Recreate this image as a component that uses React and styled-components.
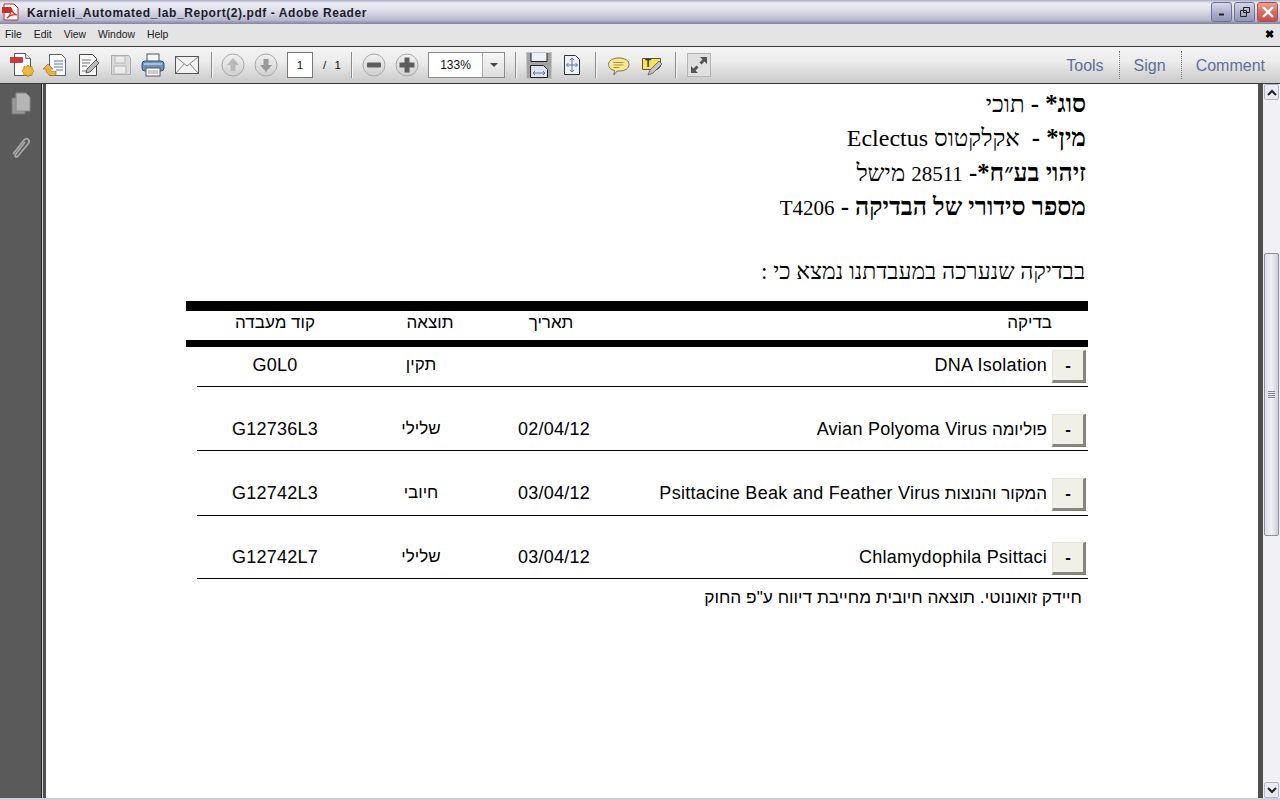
import React from 'react';
import styled, { createGlobalStyle } from 'styled-components';

const Global = createGlobalStyle`
  html, body { margin: 0; padding: 0; height: 100%; overflow: hidden; background: #fff; }
  #root { height: 100%; }
`;

const Shell = styled.div`
  width: 1280px;
  height: 800px;
  display: flex;
  flex-direction: column;
  overflow: hidden;
  font-family: "Liberation Sans", Arial, sans-serif;
`;

const TitleBar = styled.div`
  height: 24px;
  box-sizing: border-box;
  display: flex;
  align-items: center;
  padding: 0 2px 0 2px;
  background: linear-gradient(#a9aac2 0, #ebebf3 3px, #e2e2ec 9px, #b9b9cf 20px, #8d8da8 23px, #85859c 24px);
`;

const TitleIcon = styled.svg`
  width: 18px;
  height: 18px;
  margin-right: 7px;
`;

const TitleText = styled.div`
  flex: 1;
  font-size: 12px;
  font-weight: 700;
  letter-spacing: 0.57px;
  color: #1c1c2a;
  padding-top: 2px;
`;

const WinButton = styled.div`
  width: 21px;
  height: 20px;
  margin-left: 2px;
  box-sizing: border-box;
  border-radius: 3px;
  border: 1px solid ${p => (p.$close ? '#8c5a60' : '#6f7290')};
  background: ${p => (p.$close
    ? 'linear-gradient(#ee9f8c, #e0665a 55%, #cf4a45)'
    : 'linear-gradient(#d6d8ea, #adb0cc 55%, #9295b6)')};
  display: flex;
  align-items: center;
  justify-content: center;
`;

const MenuBar = styled.div`
  height: 22px;
  box-sizing: border-box;
  background: #e4e4e4;
  display: flex;
  align-items: center;
  padding: 0 5px 1px;
  gap: 12px;
  font-size: 10.4px;
  color: #1a1a1a;
`;

const MenuSpacer = styled.div`
  flex: 1;
`;

const MenuClose = styled.span`
  font-size: 11px;
  font-weight: 700;
  color: #000;
  margin-right: 1px;
`;

const Toolbar = styled.div`
  height: 38px;
  box-sizing: border-box;
  border-top: 1px solid #3a3a3a;
  border-bottom: 1px solid #3a3a3a;
  background: linear-gradient(#f4f4f4, #ececec 40%, #c9c9c9);
  display: flex;
  align-items: center;
  padding-left: 10px;
`;

const ToolIcon = styled.svg`
  width: 24px;
  height: 24px;
  margin-right: ${p => p.$gap ?? 9}px;
  flex: none;
`;

const Divider = styled.div`
  width: 1px;
  height: 26px;
  background: #8c8c8c;
  box-shadow: 1px 0 0 #f6f6f6;
  margin-right: ${p => p.$right ?? 10}px;
  flex: none;
`;

const PageBox = styled.div`
  width: 26px;
  height: 26px;
  box-sizing: border-box;
  background: #fff;
  border: 1px solid #777;
  font-size: 11.5px;
  color: #111;
  display: flex;
  align-items: center;
  justify-content: center;
  flex: none;
`;

const PageOf = styled.div`
  width: 38px;
  padding-left: 10px;
  box-sizing: border-box;
  font-size: 11.5px;
  color: #111;
  word-spacing: 5px;
  flex: none;
`;

const ZoomBox = styled.div`
  width: 77px;
  height: 26px;
  box-sizing: border-box;
  background: #fff;
  border: 1px solid #8c8c8c;
  display: flex;
  font-size: 12px;
  color: #111;
  flex: none;
  margin-right: 10px;
`;

const ZoomValue = styled.div`
  flex: 1;
  display: flex;
  align-items: center;
  justify-content: center;
`;

const ZoomCaret = styled.div`
  width: 21px;
  border-left: 1px solid #aaa;
  background: linear-gradient(#f6f6f6, #dedede);
  display: flex;
  align-items: center;
  justify-content: center;
  &::after {
    content: '';
    border-left: 4px solid transparent;
    border-right: 4px solid transparent;
    border-top: 4px solid #444;
  }
`;

const ActiveTool = styled.div`
  width: 26px;
  height: 27px;
  box-sizing: border-box;
  background: #a3a3a3;
  border: 1px solid #c4c4c4;
  display: flex;
  align-items: center;
  justify-content: center;
  margin-right: 8px;
  flex: none;
`;

const TaskLinks = styled.div`
  margin-left: auto;
  display: flex;
  align-items: stretch;
  height: 28px;
`;

const TaskLink = styled.div`
  display: flex;
  align-items: center;
  padding: 2px 15px 0 14px;
  font-size: 16px;
  color: #5d7293;
  border-right: ${p => (p.$last ? 'none' : '1px dotted #777')};
`;

const Body = styled.div`
  flex: 1;
  display: flex;
  min-height: 0;
`;

const BottomEdge = styled.div`
  height: 2px;
  flex: none;
  background: #cdcddb;
`;

const NavPane = styled.div`
  width: 41px;
  background: #5a5a5a;
  display: flex;
  flex-direction: column;
  align-items: center;
  padding: 8px 0 0 0;
  gap: 19px;
  box-sizing: border-box;
  flex: none;
`;

const NavEdge = styled.div`
  width: 5px;
  flex: none;
  background: linear-gradient(90deg, #242424 0 1px, #cfcfcf 1px 2px, #505050 2px);
`;

const Viewer = styled.div`
  flex: 1;
  background: #fff;
  min-width: 0;
  padding: 0 170px 0 140px;
  box-sizing: border-box;
  direction: rtl;
  overflow: hidden;
`;

const PageGutter = styled.div`
  width: 5px;
  background: #4f4f4f;
  flex: none;
`;

const Scrollbar = styled.div`
  width: 17px;
  flex: none;
  background: #f0f0f6;
  display: flex;
  flex-direction: column;
  align-items: center;
`;

const ScrollArrow = styled.div`
  width: 15px;
  height: 16px;
  box-sizing: border-box;
  border: 1px solid #b5b5c5;
  border-radius: 2px;
  background: #e9e9f1;
  display: flex;
  align-items: center;
  justify-content: center;
  flex: none;
`;

const ScrollTrack = styled.div`
  flex: 1;
  width: 100%;
  padding: 153px 1px 0;
  box-sizing: border-box;
`;

const ScrollThumb = styled.div`
  height: 283px;
  box-sizing: border-box;
  border: 1px solid #8f8f9a;
  border-radius: 2px;
  background: linear-gradient(90deg, #dedee8, #f0f0f6 50%, #cfcfdc);
  display: flex;
  align-items: center;
  justify-content: center;
  &::after {
    content: '';
    width: 7px;
    height: 7px;
    background: repeating-linear-gradient(#85858f 0 1px, transparent 1px 2px);
  }
`;

const InfoLines = styled.div`
  display: flex;
  flex-direction: column;
  padding: 3px 2px 0 0;
  margin-bottom: 32px;
  font-family: "Liberation Serif", "Times New Roman", serif;
  font-size: 24px;
  color: #000;
`;

const InfoLine = styled.div`
  height: 34.3px;
  line-height: 34px;
  white-space: pre;
  b { font-weight: 700; font-size: 24.7px; }
`;

const Digits = styled.span`
  font-size: 21px;
`;

const Lead = styled.div`
  font-family: "Liberation Serif", "Times New Roman", serif;
  font-size: 23px;
  height: 36px;
  line-height: 32px;
  padding-right: 3px;
  color: #000;
`;

const HeadRow = styled.div`
  margin-top: 9px;
  border-top: 10px solid #000;
  border-bottom: 7px solid #000;
  height: 46px;
  padding-bottom: 5px;
  box-sizing: border-box;
  display: grid;
  grid-template-columns: 36px 1fr 110px 132px 178px;
  align-items: center;
  font-size: 17px;
  color: #000;
`;

const HeadCell = styled.div`
  text-align: ${p => (p.$start ? 'right' : 'center')};
  grid-column: ${p => p.$col};
`;

const Row = styled.div`
  margin-left: 11px;
  height: ${p => p.$h}px;
  box-sizing: border-box;
  border-bottom: 1px solid #000;
  display: grid;
  grid-template-columns: 36px 1fr 130px 136px 156px;
  align-items: start;
  font-size: 17px;
  color: #000;
  margin-bottom: ${p => p.$gap ?? 0}px;
`;

const MinusButton = styled.div`
  width: 34px;
  height: 33px;
  margin: 3px 2px 0 0;
  box-sizing: border-box;
  border-top: 1px solid #e6e5da;
  border-left: 1px solid #e6e5da;
  border-right: 3px solid #85857c;
  border-bottom: 3px solid #85857c;
  background: #f1f0e6;
  font-size: 17px;
  font-weight: 700;
  display: flex;
  align-items: center;
  justify-content: center;
`;

const Cell = styled.div`
  padding-top: 8px;
  white-space: nowrap;
  text-align: ${p => (p.$start ? 'right' : 'center')};
  padding-right: ${p => (p.$start ? '5px' : 0)};
`;

const Latin = styled.span`
  font-size: 18px;
  letter-spacing: 0.27px;
`;

const Note = styled.div`
  font-size: 17.3px;
  padding: 8px 6px 0 0;
  color: #000;
  white-space: nowrap;
`;

function Pdf() {
  return (
    <TitleIcon viewBox="0 0 18 18">
      <path d="M2 1h10l4 4v12H2z" fill="#fff" stroke="#a33" />
      <rect x="0" y="4" width="9" height="6" fill="#c8302a" />
      <path d="M5 15c3-2 5-7 4-10 1 4 3 6 6 7-4-1-7 0-10 3z" fill="none" stroke="#d22" strokeWidth="1.2" />
    </TitleIcon>
  );
}

const CreateIcon = () => (
  <ToolIcon viewBox="0 0 24 24" $gap={9}>
    <path d="M4.500 0.500h11l5 5v17h-16z" fill="#fdfdfd" stroke="#555" />
    <path d="M15.500 0.500v5h5" fill="#ddd" stroke="#777" />
    <rect x="0.500" y="4.500" width="12" height="5" fill="#d6333a" stroke="#8c1c20" strokeWidth=".6" />
    <path d="M18 12l1.500 2 2.500-.5.300 2.500 1.700 2-1.700 2-.3 2.500-2.500-.5L18 24l-1.500-2-2.500.5-.3-2.500-1.700-2 1.700-2 .3-2.500 2.500.5z" fill="#f0b93a" stroke="#b57d18" strokeWidth=".7" />
  </ToolIcon>
);

const CombineIcon = () => (
  <ToolIcon viewBox="0 0 24 24" $gap={10}>
    <path d="M6.500 1.500h12l4 4v17h-16z" fill="#fdfdfd" stroke="#56617c" />
    <path d="M11 8h9M11 11h9M11 14h9M13 17h7" stroke="#4a7cc0" strokeWidth="1.200" />
    <path d="M13 22c-6 2-10-1-10-6l-3 0 5-5 5 5h-3c0 2 2 3 6 2z" fill="#f0b040" stroke="#a87418" strokeWidth=".7" />
  </ToolIcon>
);

const EditIcon = () => (
  <ToolIcon viewBox="0 0 24 24" $gap={8}>
    <path d="M2.500 1.500h13l4 4v17h-17z" fill="#f7f7f7" stroke="#444" />
    <path d="M5 7h9M5 10h8M5 13h5M5 18h5" stroke="#777" />
    <path d="M9 20l1-4 9-9 3 3-9 9z" fill="#bbb" stroke="#444" strokeWidth=".8" />
  </ToolIcon>
);

const SaveIcon = () => (
  <ToolIcon viewBox="0 0 24 24" $gap={8}>
    <path d="M2.500 2.500h17l2 2v17h-19z" fill="#dcdcdc" stroke="#aaa" />
    <rect x="6" y="3" width="10" height="7" fill="#ececec" stroke="#b4b4b4" />
    <rect x="5" y="13" width="12" height="8" fill="#ececec" stroke="#b4b4b4" />
  </ToolIcon>
);

const PrintIcon = () => (
  <ToolIcon viewBox="0 0 24 24" $gap={10}>
    <rect x="6" y="1" width="12" height="8" fill="#f5f5f5" stroke="#555" />
    <rect x="1" y="8" width="22" height="10" rx="3" fill="#6f93b8" stroke="#33506f" />
    <rect x="3" y="10" width="18" height="2" fill="#a8c2dc" />
    <rect x="5" y="15" width="14" height="8" fill="#fff" stroke="#555" />
    <path d="M7 18h10M7 20h10" stroke="#999" />
  </ToolIcon>
);

const MailIcon = () => (
  <ToolIcon viewBox="0 0 24 24" $gap={12}>
    <rect x="0.500" y="3.500" width="23" height="17" fill="#f2f2f2" stroke="#555" />
    <path d="M1 4l11 9 11-9M1 20l8-9M23 20l-8-9" fill="none" stroke="#888" />
  </ToolIcon>
);

const RoundIcon = ({ kind }) => (
  <ToolIcon viewBox="0 0 24 24" $gap={9}>
    <defs>
      <linearGradient id={`g-${kind}`} x1="0" y1="0" x2="0" y2="1">
        <stop offset="0" stopColor="#f2f2f2" />
        <stop offset="1" stopColor="#cfcfcf" />
      </linearGradient>
    </defs>
    <circle cx="12" cy="12" r="11" fill={`url(#g-${kind})`} stroke="#a8a8a8" />
    {kind === 'up' && <path d="M12 5l6 7h-3.500v6h-5v-6H6z" fill="#b9b9b9" />}
    {kind === 'down' && <path d="M12 19l6-7h-3.500V6h-5v6H6z" fill="#9a9a9a" />}
    {kind === 'minus' && <rect x="5" y="9.500" width="14" height="5" rx="1" fill="#5e5e5e" />}
    {kind === 'plus' && <path d="M9.500 4.500h5v5h5v5h-5v5h-5v-5h-5v-5h5z" fill="#5e5e5e" />}
  </ToolIcon>
);

const FitWidth = () => (
  <svg width="18" height="25" viewBox="0 0 18 25">
    <path d="M1 0v8.500h16V0" fill="#eef1f6" stroke="#222" />
    <path d="M0.500 24.500v-12h13l4 4v8z" fill="#dfe4ec" stroke="#222" />
    <path d="M3 20h12M3 20l2-2M3 20l2 2M15 20l-2-2M15 20l-2 2" stroke="#5577aa" fill="none" />
  </svg>
);

const FitPage = () => (
  <ToolIcon viewBox="0 0 24 24" $gap={11}>
    <path d="M4.500 2.500h11l4 4v15h-15z" fill="#eef0f7" stroke="#333" />
    <path d="M12 5v14M6.500 12h11M12 5l-2 2M12 5l2 2M12 19l-2-2M12 19l2-2M6.500 12l2-2M6.500 12l2 2M17.500 12l-2-2M17.500 12l-2 2" stroke="#5577aa" fill="none" />
  </ToolIcon>
);

const Bubble = () => (
  <ToolIcon viewBox="0 0 24 24" $gap={9}>
    <path d="M12 5c6 0 10 2.500 10 6.500S18 18 12 18l-2 0-3 4 .5-4.500C3.500 16.500 1.500 14 1.500 11.500 1.500 7.500 6 5 12 5z" fill="#f6ea8c" stroke="#77775a" />
    <path d="M6.500 9.500h10M6.500 12h10M6.500 14.500h6" stroke="#a39a3f" />
  </ToolIcon>
);

const Sticky = () => (
  <ToolIcon viewBox="0 0 24 24" $gap={11}>
    <path d="M2.500 5.500h18v8l-3 3h-15z" fill="#f9e44a" stroke="#555" />
    <text x="5" y="14" fontSize="10" fontWeight="700" fontFamily="Liberation Sans" fill="#333">T</text>
    <path d="M8 22l2-5 9-9 3 3-9 9z" fill="#c3c3c3" stroke="#555" strokeWidth=".8" />
  </ToolIcon>
);

const Expand = () => (
  <ToolIcon viewBox="0 0 24 24" $gap={0}>
    <rect x="0.500" y="0.500" width="23" height="23" fill="#e0e0e0" stroke="#b4b4b4" />
    <path d="M13 4h7v7l-2.500-2.500-3 3-2-2 3-3z" fill="#555" />
    <path d="M11 20H4v-7l2.500 2.500 3-3 2 2-3 3z" fill="#555" />
  </ToolIcon>
);

const Chevron = ({ up }) => (
  <svg width="10" height="7" viewBox="0 0 10 7">
    <path d={up ? 'M1 6l4-4 4 4' : 'M1 1l4 4 4-4'} fill="none" stroke="#222" strokeWidth="2" />
  </svg>
);

const rows = [
  { test: <Latin>DNA Isolation</Latin>, date: '', result: 'תקין', code: 'G0L0', h: 40, gap: 24 },
  { test: <>פוליומה <Latin>Avian Polyoma Virus</Latin></>, date: '02/04/12', result: 'שלילי', code: 'G12736L3', h: 40, gap: 24 },
  { test: <>המקור והנוצות <Latin>Psittacine Beak and Feather Virus</Latin></>, date: '03/04/12', result: 'חיובי', code: 'G12742L3', h: 41, gap: 23 },
  { test: <Latin>Chlamydophila Psittaci</Latin>, date: '03/04/12', result: 'שלילי', code: 'G12742L7', h: 40, gap: 0 },
];

export default function App() {
  return (
    <Shell>
      <Global />
      <TitleBar>
        <Pdf />
        <TitleText>Karnieli_Automated_lab_Report(2).pdf - Adobe Reader</TitleText>
        <WinButton>
          <svg width="10" height="10" viewBox="0 0 10 10"><path d="M2 7.500h5" stroke="#222" strokeWidth="2" /></svg>
        </WinButton>
        <WinButton>
          <svg width="12" height="12" viewBox="0 0 12 12"><path d="M4.500 1.500h6v5h-6zM1.500 4.500h6v6h-6z" fill="none" stroke="#222" /></svg>
        </WinButton>
        <WinButton $close>
          <svg width="14" height="14" viewBox="0 0 14 14"><path d="M2 2l10 10M12 2L2 12" stroke="#fff" strokeWidth="2.400" /></svg>
        </WinButton>
      </TitleBar>
      <MenuBar>
        <span>File</span>
        <span>Edit</span>
        <span>View</span>
        <span>Window</span>
        <span>Help</span>
        <MenuSpacer />
        <MenuClose>✖</MenuClose>
      </MenuBar>
      <Toolbar>
        <CreateIcon />
        <CombineIcon />
        <EditIcon />
        <SaveIcon />
        <PrintIcon />
        <MailIcon />
        <Divider $right={9} />
        <RoundIcon kind="up" />
        <RoundIcon kind="down" />
        <PageBox>1</PageBox>
        <PageOf>/ 1</PageOf>
        <Divider />
        <RoundIcon kind="minus" />
        <RoundIcon kind="plus" />
        <ZoomBox>
          <ZoomValue>133%</ZoomValue>
          <ZoomCaret />
        </ZoomBox>
        <Divider />
        <ActiveTool><FitWidth /></ActiveTool>
        <FitPage />
        <Divider $right={11} />
        <Bubble />
        <Sticky />
        <Divider $right={11} />
        <Expand />
        <TaskLinks>
          <TaskLink>Tools</TaskLink>
          <TaskLink>Sign</TaskLink>
          <TaskLink $last>Comment</TaskLink>
        </TaskLinks>
      </Toolbar>
      <Body>
        <NavPane>
          <svg width="24" height="24" viewBox="0 0 24 24">
            <path d="M3 6h13v16H3z" fill="#9a9a9a" stroke="#777" />
            <path d="M7 1h10l4 4v14H7z" fill="#b5b5b5" stroke="#888" />
          </svg>
          <svg width="24" height="26" viewBox="0 0 24 26">
            <path d="M4 19L15 5c3-3 7 0 4 4L9 21c-2 2-4 0-2-2l9-12" fill="none" stroke="#a8a8a8" strokeWidth="1.800" />
          </svg>
        </NavPane>
        <NavEdge />
        <Viewer>
          <InfoLines>
            <InfoLine><b>סוג* - </b>תוכי</InfoLine>
            <InfoLine><b>מין* - </b> אקלקטוס Eclectus</InfoLine>
            <InfoLine><b>זיהוי בע״ח*- </b><Digits>28511</Digits> מישל</InfoLine>
            <InfoLine><b>מספר סידורי של הבדיקה - </b><Digits>T4206</Digits></InfoLine>
          </InfoLines>
          <Lead>בבדיקה שנערכה במעבדתנו נמצא כי :</Lead>
          <HeadRow>
            <HeadCell $start $col="2">בדיקה</HeadCell>
            <HeadCell $col="3">תאריך</HeadCell>
            <HeadCell $col="4">תוצאה</HeadCell>
            <HeadCell $col="5">קוד מעבדה</HeadCell>
          </HeadRow>
          {rows.map(r => (
            <Row key={r.code} $h={r.h} $gap={r.gap}>
              <MinusButton>-</MinusButton>
              <Cell $start>{r.test}</Cell>
              <Cell><Latin>{r.date}</Latin></Cell>
              <Cell>{r.result}</Cell>
              <Cell><Latin>{r.code}</Latin></Cell>
            </Row>
          ))}
          <Note>חיידק זואונוטי. תוצאה חיובית מחייבת דיווח ע"פ החוק</Note>
        </Viewer>
        <PageGutter />
        <Scrollbar>
          <ScrollArrow><Chevron up /></ScrollArrow>
          <ScrollTrack><ScrollThumb /></ScrollTrack>
          <ScrollArrow><Chevron /></ScrollArrow>
        </Scrollbar>
      </Body>
      <BottomEdge />
    </Shell>
  );
}
